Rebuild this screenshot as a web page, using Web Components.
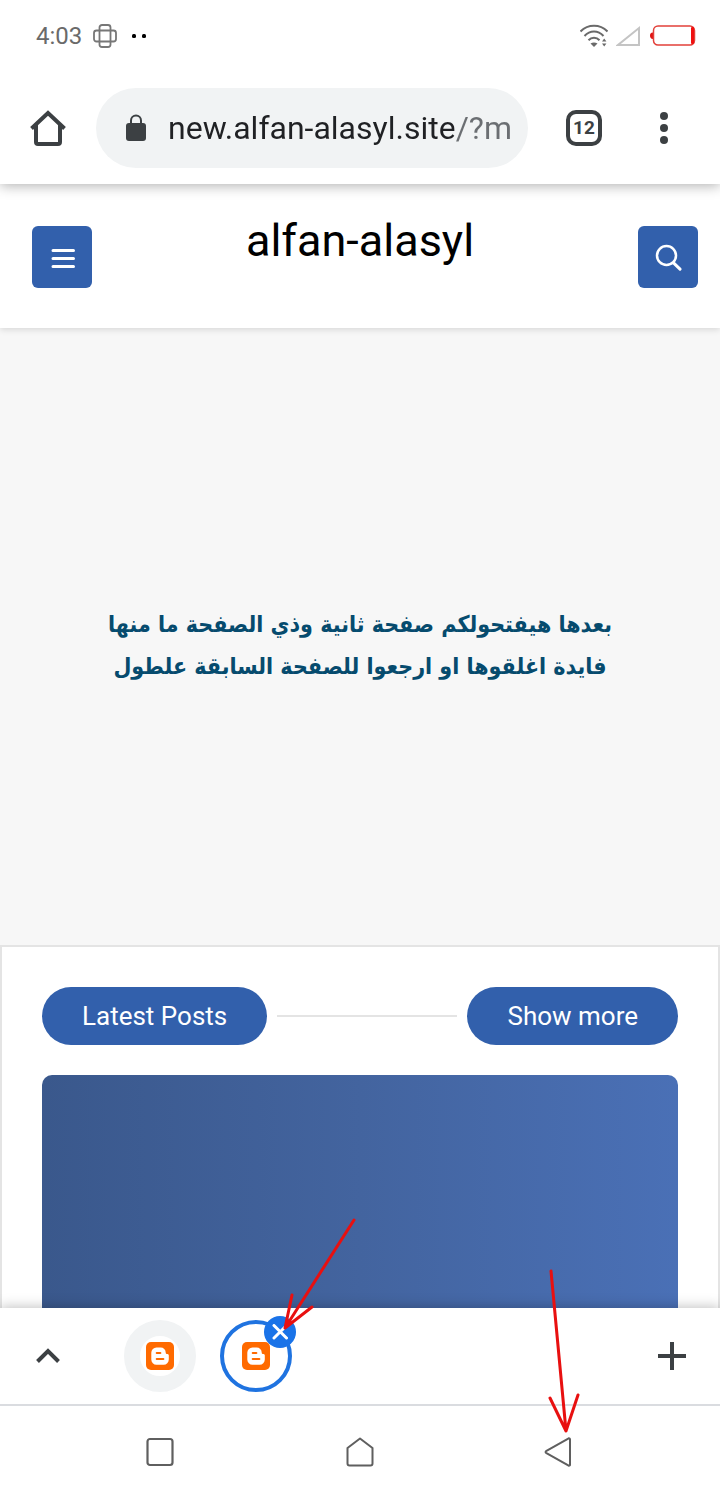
<!DOCTYPE html>
<html lang="en">
<head>
<meta charset="utf-8">
<meta name="viewport" content="width=device-width, initial-scale=1">
<title>alfan-alasyl</title>
<style>
    body {
        margin: 0;
        font-family: Roboto, "Liberation Sans", sans-serif;
        background-color: #fff;
    }
</style>
</head>
<body>
<phone-screen>
    <status-bar></status-bar>
    <browser-bar></browser-bar>
    <site-header>alfan-alasyl</site-header>
    <page-notice>بعدها هيفتحولكم صفحة ثانية وذي الصفحة ما منها<br>فايدة اغلقوها او ارجعوا للصفحة السابقة علطول</page-notice>
    <posts-panel>
        <span slot="title">Latest Posts</span>
        <span slot="more">Show more</span>
    </posts-panel>
    <tab-strip>
        <tab-chip></tab-chip>
        <tab-chip active></tab-chip>
    </tab-strip>
    <nav-bar></nav-bar>
    <arrow-marks></arrow-marks>
</phone-screen>

<script>
const reset = `
    * {
        margin: 0;
        padding: 0;
        box-sizing: border-box;
    }
    svg {
        display: block;
    }
    button {
        display: flex;
        align-items: center;
        justify-content: center;
        border: 0;
        background: none;
        font: inherit;
        cursor: pointer;
    }
`;

class PhoneScreen extends HTMLElement {
    constructor() {
        super();
        this.attachShadow({ mode: "open" }).innerHTML = `
            <style>
                :host {
                    display: flex;
                    flex-direction: column;
                    position: relative;
                    min-height: 100vh;
                    overflow: hidden;
                }
            </style>
            <slot></slot>`;
    }
}

class StatusBar extends HTMLElement {
    constructor() {
        super();
        this.attachShadow({ mode: "open" }).innerHTML = `
            <style>
                ${reset}
                :host {
                    display: flex;
                    align-items: center;
                    justify-content: space-between;
                    position: relative;
                    z-index: 2;
                    height: 72px;
                    padding: 0 24px 0 36px;
                    box-sizing: border-box;
                    font-size: 24px;
                    line-height: 28px;
                    color: #6a6a6a;
                    background-color: #fff;
                }
                div {
                    display: flex;
                    align-items: center;
                }
                .left {
                    gap: 11px;
                }
                .right {
                    gap: 8px;
                }
            </style>
            <div class="left">
                <time>4:03</time>
                <svg width="24" height="24" fill="none" stroke="#777" stroke-width="1.8">
                    <rect x="6.5" y="1" width="11" height="22" rx="2.5"/>
                    <rect x="1" y="6.5" width="22" height="11" rx="2.5"/>
                </svg>
                <svg width="20" height="24" fill="#000">
                    <rect x="4" y="10" width="4" height="4" rx="1.5"/>
                    <rect x="14" y="10" width="4" height="4" rx="1.5"/>
                </svg>
            </div>
            <div class="right">
                <svg width="28" height="24" fill="none" stroke="#6a6a6a" stroke-width="2">
                    <path d="M.5 7.5C8-.2 20-.2 27.500 7.500"/>
                    <path d="M4.500 12C10 6 18 6 23.500 12"/>
                    <path d="M8.500 16.200C11.500 13 16.500 13 19.500 16.200"/>
                    <path d="M10.500 19.500Q14 17.500 17.500 19.500L14 23z" fill="#6a6a6a" stroke="none"/>
                    <path d="M22 17.500l2.200-3 2.200 3zM22 19.500l2.200 3 2.200-3z" fill="#6a6a6a" stroke="none"/>
                </svg>
                <svg width="25" height="24" fill="none" stroke="#c4c4c4" stroke-width="2">
                    <path d="M2 21H23V4z"/>
                </svg>
                <svg width="47" height="24">
                    <path d="M4 8.500C1.500 8.500 1 10 1 11.500S1.500 15 4 15z" fill="#e01414"/>
                    <rect x="4.500" y="2" width="41" height="19" rx="4.500" fill="none" stroke="#e2403a" stroke-width="1.500"/>
                    <rect x="42" y="3" width="3" height="17" rx="1" fill="#f01010"/>
                </svg>
            </div>`;
    }
}

class BrowserBar extends HTMLElement {
    constructor() {
        super();
        this.attachShadow({ mode: "open" }).innerHTML = `
            <style>
                ${reset}
                :host {
                    display: flex;
                    align-items: center;
                    position: relative;
                    z-index: 1;
                    padding: 16px 16px 16px 0;
                    background-color: #fff;
                    box-shadow: 0 2px 12px rgba(0, 0, 0, 0.3);
                }
                button {
                    flex: none;
                    width: 80px;
                    height: 80px;
                }
                .home {
                    width: 96px;
                }
                .address {
                    display: flex;
                    align-items: center;
                    gap: 20px;
                    flex: 1;
                    min-width: 0;
                    height: 80px;
                    margin-right: 16px;
                    padding: 0 16px 0 28px;
                    border-radius: 40px;
                    background-color: #f1f3f4;
                }
                .address svg {
                    flex: none;
                }
                /* host part dark, path part grey */
                input {
                    flex: 1;
                    min-width: 0;
                    height: 48px;
                    border: 0;
                    outline: 0;
                    font: 32px/48px Roboto, sans-serif;
                    color: #202124;
                    background: linear-gradient(to right, #202124 286px, #6b6e72 286px);
                    -webkit-background-clip: text;
                    background-clip: text;
                    -webkit-text-fill-color: transparent;
                }
                .count {
                    display: flex;
                    align-items: center;
                    justify-content: center;
                    width: 36px;
                    height: 36px;
                    border: 4px solid #3c4043;
                    border-radius: 10px;
                    font: bold 19px/24px Roboto, sans-serif;
                    color: #3c4043;
                }
            </style>
            <button class="home" aria-label="Home">
                <svg width="36" height="40" fill="none" stroke="#3c4043" stroke-width="4" stroke-linejoin="round">
                    <path d="M6 17V34a2 2 0 0 0 2 2H28a2 2 0 0 0 2-2V17"/>
                    <path d="M1.500 20.500L18 5L34.500 20.500" stroke-linejoin="miter"/>
                </svg>
            </button>
            <label class="address">
                <svg width="24" height="28">
                    <rect x="2" y="9" width="20" height="18" rx="3" fill="#3c4043"/>
                    <path d="M7 10V6.500a5 5 0 0 1 10 0V10" fill="none" stroke="#3c4043" stroke-width="2"/>
                </svg>
                <input type="text" value="new.alfan-alasyl.site/?m" aria-label="Address" spellcheck="false">
            </label>
            <button aria-label="Tabs"><span class="count">12</span></button>
            <button aria-label="Menu">
                <svg width="8" height="32" fill="#3c4043">
                    <circle cx="4" cy="4" r="4"/>
                    <circle cx="4" cy="16" r="4"/>
                    <circle cx="4" cy="28" r="4"/>
                </svg>
            </button>`;
    }
}

class SiteHeader extends HTMLElement {
    constructor() {
        super();
        this.attachShadow({ mode: "open" }).innerHTML = `
            <style>
                ${reset}
                :host {
                    display: grid;
                    grid-template-columns: 1fr auto 1fr;
                    align-items: start;
                    min-height: 144px;
                    padding: 26px 22px;
                    box-sizing: border-box;
                    position: relative;
                    background-color: #fff;
                    box-shadow: 0 2px 6px rgba(0, 0, 0, 0.12);
                }
                h1 {
                    font-size: 45px;
                    line-height: 62px;
                    font-weight: 400;
                    color: #000;
                }
                button {
                    width: 60px;
                    height: 62px;
                    margin-top: 16px;
                    border-radius: 6px;
                    background-color: #3260ac;
                }
                .menu {
                    margin-left: 10px;
                }
                .search {
                    justify-self: end;
                }
            </style>
            <button class="menu" aria-label="Menu">
                <svg width="28" height="28" stroke="#fff" stroke-width="3" stroke-linecap="round">
                    <path d="M5 7.500H25.500M5 15.500H25.500M5 23.500H25.500"/>
                </svg>
            </button>
            <h1><slot></slot></h1>
            <button class="search" aria-label="Search">
                <svg width="28" height="28" fill="none" stroke="#fff" stroke-width="2.500" stroke-linecap="round">
                    <circle cx="12.500" cy="12.500" r="9.500"/>
                    <path d="M19.800 20.200L26 26.200" stroke-width="3"/>
                </svg>
            </button>`;
    }
}

class PageNotice extends HTMLElement {
    constructor() {
        super();
        this.attachShadow({ mode: "open" }).innerHTML = `
            <style>
                ${reset}
                :host {
                    display: flex;
                    flex: 1;
                    align-items: center;
                    justify-content: center;
                    padding-top: 16px;
                    background-color: #f7f7f7;
                }
                p {
                    font: bold 23px/42px "DejaVu Sans Condensed", "DejaVu Sans", sans-serif;
                    text-align: center;
                    color: #064b6e;
                }
            </style>
            <p dir="rtl" lang="ar"><slot></slot></p>`;
    }
}

class PostsPanel extends HTMLElement {
    constructor() {
        super();
        this.attachShadow({ mode: "open" }).innerHTML = `
            <style>
                ${reset}
                :host {
                    display: block;
                    padding: 40px 40px 0;
                    border: 2px solid #e4e4e4;
                    border-bottom: 0;
                    background-color: #fff;
                }
                header {
                    display: flex;
                    align-items: center;
                    gap: 10px;
                    margin-bottom: 30px;
                }
                h2, a {
                    padding: 0 40px;
                    border-radius: 29px;
                    font-size: 26px;
                    line-height: 58px;
                    font-weight: 400;
                    color: #fff;
                    text-decoration: none;
                    background-color: #3260ac;
                }
                .line {
                    flex: 1;
                    height: 2px;
                    background-color: #e4e4e4;
                }
                .cover {
                    height: 233px;
                    border-radius: 10px 10px 0 0;
                    background: linear-gradient(to right, #3a588c, #43649f 50%, #4a70b6);
                }
            </style>
            <header>
                <h2><slot name="title"></slot></h2>
                <div class="line"></div>
                <a href="#"><slot name="more"></slot></a>
            </header>
            <div class="cover"></div>`;
    }
}

class TabStrip extends HTMLElement {
    constructor() {
        super();
        this.attachShadow({ mode: "open" }).innerHTML = `
            <style>
                ${reset}
                :host {
                    display: flex;
                    align-items: center;
                    justify-content: space-between;
                    position: relative;
                    border-bottom: 2px solid #dadce0;
                    background-color: #fff;
                    box-shadow: 0 -1px 12px rgba(0, 0, 0, 0.25);
                }
                button {
                    width: 96px;
                    height: 96px;
                }
                .tabs {
                    display: flex;
                    flex: 1;
                    gap: 24px;
                    padding: 0 28px;
                }
            </style>
            <button aria-label="Show tabs">
                <svg width="24" height="16" fill="none" stroke="#3c4043" stroke-width="4">
                    <path d="M1.500 13.500L12 3L22.500 13.500"/>
                </svg>
            </button>
            <div class="tabs"><slot></slot></div>
            <button aria-label="New tab">
                <svg width="28" height="28" stroke="#3c4043" stroke-width="4">
                    <path d="M14 0V28M0 14H28"/>
                </svg>
            </button>`;
    }
}

class TabChip extends HTMLElement {
    constructor() {
        super();
        this.attachShadow({ mode: "open" });
    }

    connectedCallback() {
        const close = this.hasAttribute("active") ? `
            <button class="close" aria-label="Close tab">
                <svg width="16" height="16" stroke="#fff" stroke-width="3" stroke-linecap="round">
                    <path d="M2 1.500L14.500 14M14 2L2 14"/>
                </svg>
            </button>` : "";

        this.shadowRoot.innerHTML = `
            <style>
                ${reset}
                :host {
                    display: block;
                    position: relative;
                }
                .tab {
                    width: 72px;
                    height: 72px;
                    border: 16px solid #f1f3f4;
                    border-radius: 50%;
                    background-color: #fff;
                }
                :host([active]) .tab {
                    border: 4px solid #1f73e0;
                }
                .close {
                    position: absolute;
                    top: -4px;
                    right: -4px;
                    width: 32px;
                    height: 32px;
                    border-radius: 50%;
                    background-color: #1a73e8;
                }
            </style>
            <button class="tab" aria-label="Blogger tab">
                <svg width="28" height="28">
                    <rect width="28" height="28" rx="5" fill="#ff6a00"/>
                    <path d="M10.500 5.500h4.200a5 5 0 0 1 5 5c0 1.200.6 1.500 1.800 1.600.9.100 1.300.600 1.300 1.500v3.900a5.200 5.200 0 0 1-5.200 5.200h-7.100a5.200 5.200 0 0 1-5.200-5.200v-6.800a5.200 5.200 0 0 1 5.200-5.200z" fill="#fff"/>
                    <path d="M10.800 11h3.500M10.800 17h6.500" stroke="#ff6a00" stroke-width="2.200" stroke-linecap="round"/>
                </svg>
            </button>
            ${close}`;
    }
}

class NavBar extends HTMLElement {
    constructor() {
        super();
        this.attachShadow({ mode: "open" }).innerHTML = `
            <style>
                ${reset}
                :host {
                    display: grid;
                    grid-template-columns: repeat(3, 1fr);
                    position: relative;
                    padding: 0 60px;
                    background-color: #fff;
                }
                button {
                    height: 94px;
                }
            </style>
            <button aria-label="Recent apps">
                <svg width="28" height="32" fill="none" stroke="#5f5f5f" stroke-width="2.200">
                    <rect x="1.500" y="2" width="25" height="26" rx="2.500"/>
                </svg>
            </button>
            <button aria-label="Home screen">
                <svg width="28" height="32" fill="none" stroke="#5f5f5f" stroke-width="2" stroke-linejoin="round">
                    <path d="M14 1.500L26.500 11V26.500a2 2 0 0 1-2 2H3.500a2 2 0 0 1-2-2V11z"/>
                </svg>
            </button>
            <button aria-label="Back">
                <svg width="32" height="32" fill="none" stroke="#5f5f5f" stroke-width="2" stroke-linejoin="round">
                    <path d="M2 14.200L24.700 1.300a1 1 0 0 1 1.300 1V27.700a1 1 0 0 1-1.300 1L2 15.800a1 1 0 0 1 0-1.600z"/>
                </svg>
            </button>`;
    }
}

/* hand drawn arrows over the bottom of the screen */
class ArrowMarks extends HTMLElement {
    constructor() {
        super();
        this.attachShadow({ mode: "open" }).innerHTML = `
            <style>
                :host {
                    display: block;
                    position: absolute;
                    left: 270px;
                    bottom: 60px;
                    z-index: 2;
                    pointer-events: none;
                }
                svg {
                    display: block;
                }
            </style>
            <svg width="330" height="240" viewBox="270 1200 330 240" fill="none" stroke="#e81010" stroke-width="3" stroke-linecap="round" stroke-linejoin="round">
                <path d="M354 1220L285 1328M292 1295L285 1328L312 1307"/>
                <path d="M551 1271L566 1431M550 1398L566 1431L578 1395"/>
            </svg>`;
    }
}

customElements.define("phone-screen", PhoneScreen);
customElements.define("status-bar", StatusBar);
customElements.define("browser-bar", BrowserBar);
customElements.define("site-header", SiteHeader);
customElements.define("page-notice", PageNotice);
customElements.define("posts-panel", PostsPanel);
customElements.define("tab-strip", TabStrip);
customElements.define("tab-chip", TabChip);
customElements.define("nav-bar", NavBar);
customElements.define("arrow-marks", ArrowMarks);
</script>
</body>
</html>
